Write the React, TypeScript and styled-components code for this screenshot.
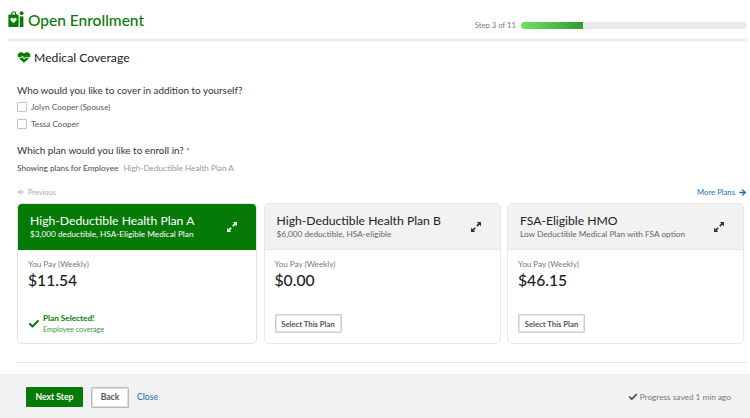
import styled, { createGlobalStyle } from "styled-components";
import { ArrowLeft, ArrowRight, Check } from "lucide-react";

const GREEN = "#067a06";
const LINK = "#1f72b8";

const GlobalStyle = createGlobalStyle`
  html, body {
    margin: 0;
    padding: 0;
    background: #fff;
    font-family: Lato, "Open Sans", sans-serif;
    color: #222;
  }
`;

const plans = [
  {
    name: "High-Deductible Health Plan A",
    detail: "$3,000 deductible, HSA-Eligible Medical Plan",
    price: "$11.54",
    selected: true,
  },
  {
    name: "High-Deductible Health Plan B",
    detail: "$6,000 deductible, HSA-eligible",
    price: "$0.00",
    selected: false,
  },
  {
    name: "FSA-Eligible HMO",
    detail: "Low Deductible Medical Plan with FSA option",
    price: "$46.15",
    selected: false,
  },
];

const Logo = () => (
  <svg width="16" height="17" viewBox="0 0 16 17" fill={GREEN}>
    <path d="M1.5 3.5H3.2V2.2C3.2 1 4 .4 5 .4H6.4C7.4.4 8.2 1 8.2 2.2V3.5H9.6C10.2 3.5 10.6 4 10.6 4.6V15C10.6 15.6 10.2 16 9.6 16H1.5C.8 16 .4 15.6.4 15V4.6C.4 4 .8 3.5 1.5 3.5Z" />
    <path d="M4.4 3.5V2.3C4.4 1.9 4.6 1.6 5 1.6H6.4C6.8 1.6 7 1.9 7 2.3V3.5Z" fill="#fff" />
    <path d="M5.5 12.2L2.6 9.2C1.9 8.4 2.4 6.8 3.7 6.8C4.5 6.8 5.1 7.2 5.5 7.9C5.9 7.2 6.5 6.8 7.3 6.8C8.6 6.8 9.1 8.4 8.4 9.2Z" fill="#fff" />
    <circle cx="13.6" cy="2.2" r="1.9" />
    <path d="M11.7 5.4H15.4V16H11.7Z" />
  </svg>
);

const HeartBeat = () => (
  <svg width="14" height="11" viewBox="0 0 14 12" fill={GREEN}>
    <path d="M7 11.6L1.4 6.8C-.4 5.2-.3 2.6 1.3 1.2C3 -.2 5.5.2 7 1.9C8.5.2 11-.2 12.7 1.2C14.3 2.6 14.4 5.2 12.6 6.8Z" />
    <path d="M.6 6.2H4.2L5.4 4.4L7.2 7.8L8.6 5.4L9.4 6.2H13.4" fill="none" stroke="#fff" strokeWidth="1" />
  </svg>
);

const Expand = () => (
  <svg width="10" height="10" viewBox="0 0 10 10" fill="currentColor">
    <path d="M5.8 0H10V4.2L8.5 2.7L6.4 4.8L5.2 3.6L7.3 1.5Z" />
    <path d="M4.2 10H0V5.8L1.5 7.3L3.6 5.2L4.8 6.4L2.7 8.5Z" />
  </svg>
);

export default function App() {
  return (
    <Page>
      <GlobalStyle />
      <Header>
        <Brand>
          <Logo />
          <BrandName>Open Enrollment</BrandName>
        </Brand>
        <Progress>
          <StepText>Step 3 of 11</StepText>
          <Track>
            <Fill style={{ width: `${(3 / 11) * 100}%` }} />
          </Track>
        </Progress>
      </Header>

      <Main>
        <SectionTitle>
          <HeartBeat />
          <h1>Medical Coverage</h1>
        </SectionTitle>

        <Question>Who would you like to cover in addition to yourself?</Question>
        <CheckList>
          <CheckRow>
            <Box />
            Jolyn Cooper (Spouse)
          </CheckRow>
          <CheckRow>
            <Box />
            Tessa Cooper
          </CheckRow>
        </CheckList>

        <Question $spaced>
          Which plan would you like to enroll in? <Required>*</Required>
        </Question>
        <Showing>
          <strong>Showing plans for Employee</strong>
          <span>High-Deductible Health Plan A</span>
        </Showing>

        <Pager>
          <PrevLink>
            <ArrowLeft size={8} strokeWidth={3} />
            Previous
          </PrevLink>
          <NextLink>
            More Plans
            <ArrowRight size={9} strokeWidth={3.5} color="#1c6aa8" />
          </NextLink>
        </Pager>

        <Cards>
          {plans.map((plan) => (
            <Card key={plan.name} $selected={plan.selected}>
              <CardHead $selected={plan.selected}>
                <div>
                  <PlanName>{plan.name}</PlanName>
                  <PlanDetail $selected={plan.selected}>{plan.detail}</PlanDetail>
                </div>
                <ExpandButton $selected={plan.selected}>
                  <Expand />
                </ExpandButton>
              </CardHead>
              <CardBody>
                <PayLabel>You Pay (Weekly)</PayLabel>
                <Price>{plan.price}</Price>
                {plan.selected ? (
                  <SelectedNote>
                    <Check size={12} strokeWidth={4} color={GREEN} />
                    <div>
                      <strong>Plan Selected!</strong>
                      <small>Employee coverage</small>
                    </div>
                  </SelectedNote>
                ) : (
                  <SelectButton>Select This Plan</SelectButton>
                )}
              </CardBody>
            </Card>
          ))}
        </Cards>
        <Divider />
      </Main>

      <Footer>
        <FooterActions>
          <NextButton>Next Step</NextButton>
          <BackButton>Back</BackButton>
          <CloseLink>Close</CloseLink>
        </FooterActions>
        <Saved>
          <Check size={10} strokeWidth={4} color="#444" />
          Progress saved 1 min ago
        </Saved>
      </Footer>
    </Page>
  );
}

//styled

const Page = styled.div`
  width: 750px;
  height: 418px;
  display: flex;
  flex-direction: column;
  overflow: hidden;
`;

const Header = styled.header`
  height: 39px;
  margin: 0 3px 0 8px;
  display: flex;
  justify-content: space-between;
  align-items: flex-start;
  border-bottom: 2px solid #ececec;
`;

const Brand = styled.div`
  display: flex;
  align-items: center;
  gap: 4px;
  height: 17px;
  margin-top: 11px;
`;

const BrandName = styled.span`
  font-size: 15.5px;
  font-weight: 500;
  color: ${GREEN};
`;

const Progress = styled.div`
  display: flex;
  align-items: center;
  gap: 5px;
  margin-top: 20px;
`;

const StepText = styled.span`
  font-size: 7.7px;
  color: #777;
`;

const Track = styled.div`
  width: 226px;
  height: 7px;
  border-radius: 4px;
  background: #e9e9e9;
  overflow: hidden;
`;

const Fill = styled.div`
  height: 100%;
  background: linear-gradient(90deg, #74e06a, #2f9c32);
`;

const Main = styled.main`
  flex: 1;
  padding: 0 3px 0 17px;
  display: flex;
  flex-direction: column;
`;

const SectionTitle = styled.div`
  display: flex;
  align-items: center;
  gap: 3px;
  margin-top: 8px;
  height: 16px;
  h1 {
    margin: 0;
    font-size: 12.2px;
    font-weight: 400;
    color: #222;
  }
`;

const Question = styled.div<{ $spaced?: boolean }>`
  margin-top: ${(p) => (p.$spaced ? "14px" : "18px")};
  height: 14px;
  line-height: 14px;
  font-size: 9.9px;
  color: #333;
`;

const Required = styled.span`
  color: #2a8a2a;
  font-size: 8px;
`;

const CheckList = styled.div`
  display: flex;
  flex-direction: column;
  gap: 7px;
  margin-top: 5px;
`;

const CheckRow = styled.label`
  display: flex;
  align-items: center;
  gap: 4px;
  height: 10px;
  font-size: 8.2px;
  color: #555;
`;

const Box = styled.span`
  box-sizing: border-box;
  width: 10px;
  height: 10px;
  border: 1px solid #c4c4c4;
  border-radius: 1px;
  background: #fff;
`;

const Showing = styled.div`
  display: flex;
  gap: 5px;
  margin-top: 5px;
  height: 12px;
  line-height: 12px;
  font-size: 8.2px;
  color: #999;
  strong {
    font-weight: 500;
    color: #555;
  }
`;

const Pager = styled.div`
  display: flex;
  justify-content: space-between;
  align-items: center;
  margin-top: 12px;
  height: 12px;
`;

const PrevLink = styled.span`
  display: flex;
  align-items: center;
  gap: 3px;
  font-size: 7.4px;
  color: #aaa;
`;

const NextLink = styled.span`
  display: flex;
  align-items: center;
  gap: 3px;
  font-size: 7.7px;
  color: ${LINK};
`;

const Cards = styled.div`
  display: grid;
  grid-template-columns: 240px 237px 237px;
  gap: 6.5px;
  margin-top: 5px;
  width: 727px;
`;

const Card = styled.article<{ $selected: boolean }>`
  box-sizing: border-box;
  height: 141px;
  border: 1px solid ${(p) => (p.$selected ? "#e2e2e2" : "#e8e8e8")};
  border-radius: 5px;
  overflow: hidden;
  background: #fff;
`;

const CardHead = styled.div<{ $selected: boolean }>`
  box-sizing: border-box;
  height: 46px;
  display: flex;
  justify-content: space-between;
  padding: 9px 19px 0 12px;
  background: ${(p) => (p.$selected ? GREEN : "#f2f2f2")};
  color: ${(p) => (p.$selected ? "#fff" : "#222")};
  border-bottom: 1px solid ${(p) => (p.$selected ? GREEN : "#e8e8e8")};
`;

const PlanName = styled.div`
  font-size: 12.2px;
  line-height: 16px;
`;

const PlanDetail = styled.div<{ $selected: boolean }>`
  font-size: 8.25px;
  line-height: 11px;
  color: ${(p) => (p.$selected ? "#fff" : "#666")};
`;

const ExpandButton = styled.span<{ $selected: boolean }>`
  margin-top: 9px;
  display: flex;
  color: ${(p) => (p.$selected ? "#fff" : "#333")};
`;

const CardBody = styled.div`
  padding: 8px 10px 0;
`;

const PayLabel = styled.div`
  font-size: 8.1px;
  line-height: 12px;
  color: #777;
`;

const Price = styled.div`
  height: 20px;
  font-size: 15.7px;
  line-height: 20px;
  font-weight: 500;
  color: #1c1c1c;
`;

const SelectedNote = styled.div`
  display: flex;
  align-items: center;
  gap: 3px;
  margin-top: 23px;
  strong {
    display: block;
    font-size: 8.2px;
    line-height: 11px;
    font-weight: 700;
    color: ${GREEN};
  }
  small {
    display: block;
    font-size: 7.2px;
    line-height: 11px;
    color: #3c963c;
  }
`;

const SelectButton = styled.button`
  box-sizing: border-box;
  display: block;
  margin-top: 24px;
  width: 67px;
  height: 19px;
  padding: 0;
  background: #fff;
  border: 1px solid #ccc;
  border-radius: 1px;
  box-shadow: inset 0 0 0 1px #e6e6e6;
  font-family: inherit;
  font-size: 7.7px;
  font-weight: 700;
  color: #555;
`;

const Divider = styled.hr`
  margin: 18px 0 0;
  border: 0;
  border-top: 1px solid #e2e2e2;
`;

const Footer = styled.footer`
  box-sizing: border-box;
  height: 44px;
  padding: 1px 19px 0 26px;
  display: flex;
  justify-content: space-between;
  align-items: center;
  background: #f2f2f2;
  border-top: 1px solid #ececec;
`;

const FooterActions = styled.div`
  display: flex;
  align-items: center;
`;

const NextButton = styled.button`
  width: 57px;
  height: 20px;
  padding: 0;
  border: 0;
  border-radius: 1px;
  background: ${GREEN};
  color: #fff;
  font-family: inherit;
  font-size: 8.6px;
  font-weight: 700;
`;

const BackButton = styled.button`
  box-sizing: border-box;
  width: 38px;
  height: 21px;
  margin-left: 8px;
  padding: 0;
  border: 1px solid #bbb;
  border-radius: 1px;
  box-shadow: inset 0 0 0 1px #ddd;
  background: #fff;
  color: #555;
  font-family: inherit;
  font-size: 8.6px;
  font-weight: 700;
`;

const CloseLink = styled.span`
  margin-left: 8px;
  font-size: 8.6px;
  font-weight: 500;
  color: ${LINK};
`;

const Saved = styled.div`
  display: flex;
  align-items: center;
  gap: 2px;
  font-size: 8.25px;
  color: #777;
`;
